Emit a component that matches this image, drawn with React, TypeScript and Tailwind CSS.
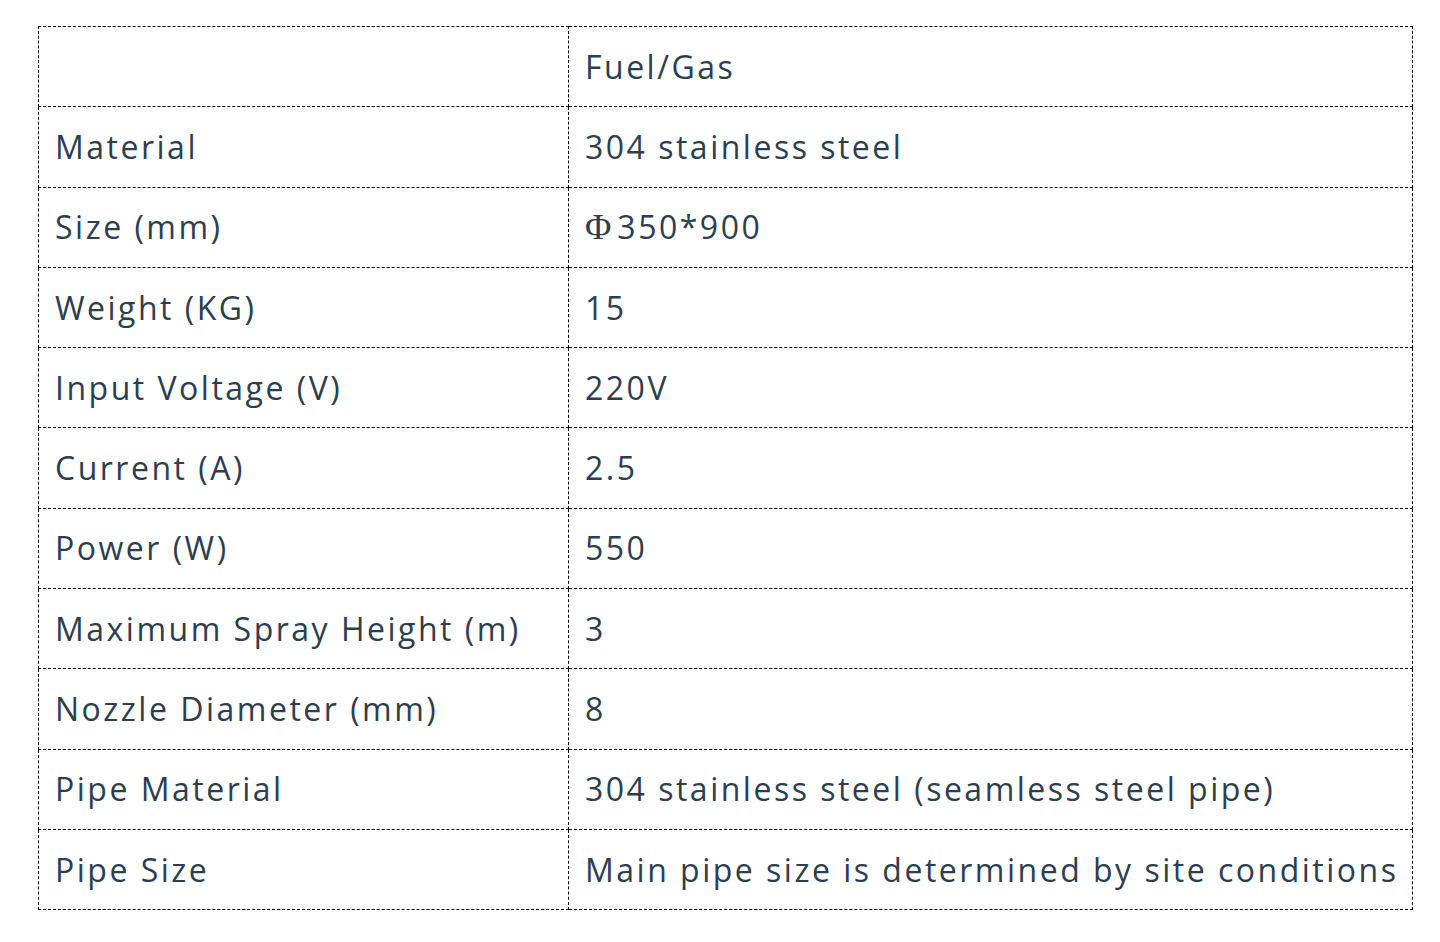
const rows: [string, React.ReactNode][] = [
  ["", "Fuel/Gas"],
  ["Material", "304 stainless steel"],
  [
    "Size (mm)",
    <>
      <span className="font-['Liberation_Serif'] text-[36px] leading-none tracking-normal mr-[6px]">Φ</span>
      350*900
    </>,
  ],
  ["Weight (KG)", "15"],
  ["Input Voltage (V)", "220V"],
  ["Current (A)", "2.5"],
  ["Power (W)", "550"],
  ["Maximum Spray Height (m)", "3"],
  ["Nozzle Diameter (mm)", "8"],
  ["Pipe Material", "304 stainless steel (seamless steel pipe)"],
  ["Pipe Size", "Main pipe size is determined by site conditions"],
];

export default function App() {
  return (
    <div className="w-[1440px] h-[942px] bg-white pt-[26px] pl-[38px]">
      <table
        className="border-collapse table-fixed w-[1375px] text-[32px] tracking-[2.5px] text-[#2c3e50]"
        style={{ fontFamily: '"Open Sans", "Liberation Sans", sans-serif' }}
      >
        <colgroup>
          <col className="w-[530px]" />
          <col />
        </colgroup>
        <tbody>
          {rows.map(([label, value], i) => (
            <tr key={i}>
              <td className="h-[80.3px] px-4 border border-dashed border-black whitespace-nowrap">
                {label}
              </td>
              <td className="h-[80.3px] px-4 border border-dashed border-black whitespace-nowrap">
                {value}
              </td>
            </tr>
          ))}
        </tbody>
      </table>
    </div>
  );
}
